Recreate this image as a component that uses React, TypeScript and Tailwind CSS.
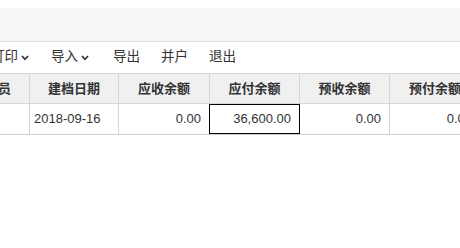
import { ReactNode } from 'react';

const font = { fontFamily: '"Liberation Sans", "Noto Sans CJK SC", sans-serif' };

function Chevron() {
  return (
    <svg width="8" height="6" viewBox="0 0 8 6" className="ml-[3px] mt-[1px]">
      <polyline points="1,1 4,4.3 7,1" fill="none" stroke="#333" strokeWidth="1.7" />
    </svg>
  );
}

function Tool({ label, menu, className }: { label: string; menu?: boolean; className?: string }) {
  return (
    <div className={`flex items-center shrink-0 ${className ?? ''}`}>
      <span>{label}</span>
      {menu && <Chevron />}
    </div>
  );
}

function Cell({ w, children, className }: { w: string; children?: ReactNode; className?: string }) {
  return (
    <div className={`${w} shrink-0 h-full flex items-center border-r border-[#d6d6d6] ${className ?? ''}`}>
      {children}
    </div>
  );
}

const cols = ['w-[76px]', 'w-[89px]', 'w-[91px]', 'w-[90px]', 'w-[90px]', 'w-[91px]'];

export default function App() {
  const headers = ['业务员', '建档日期', '应收余额', '应付余额', '预收余额', '预付余额'];

  return (
    <div className="w-[460px] h-[248px] bg-white overflow-hidden text-[#333]" style={font}>
      <div className="h-[8px] bg-white" />
      <div className="h-[34px] bg-[#f5f6f8] border-b border-[#dedede]" />

      {/* toolbar */}
      <div className="h-[31px] flex items-center text-[13.5px] -ml-[9px]">
        <Tool label="打印" menu />
        <Tool label="导入" menu className="ml-[22px]" />
        <Tool label="导出" className="ml-[24px]" />
        <Tool label="并户" className="ml-[21px]" />
        <Tool label="退出" className="ml-[21px]" />
      </div>

      {/* grid */}
      <div className="-ml-[46px] w-[560px]">
        <div className="h-[31px] flex bg-[#f0f0f0] border-y border-[#d6d6d6] text-[13px] font-bold">
          {headers.map((h, i) => (
            <Cell key={h} w={cols[i]} className="justify-center">
              {h}
            </Cell>
          ))}
        </div>
        <div className="h-[31px] flex border-b border-[#cfcfcf] text-[13px]">
          <Cell w={cols[0]} />
          <Cell w={cols[1]} className="pl-[4px]">2018-09-16</Cell>
          <Cell w={cols[2]} className="justify-end pr-[8px]">0.00</Cell>
          <Cell w={cols[3]} className="justify-end pr-[8px] relative">
            36,600.00
            <div className="absolute left-[-1px] top-0 right-[-1px] bottom-0 border border-black" />
          </Cell>
          <Cell w={cols[4]} className="justify-end pr-[8px]">0.00</Cell>
          <Cell w={cols[5]} className="justify-end pr-[8px]">0.00</Cell>
        </div>
      </div>
    </div>
  );
}
